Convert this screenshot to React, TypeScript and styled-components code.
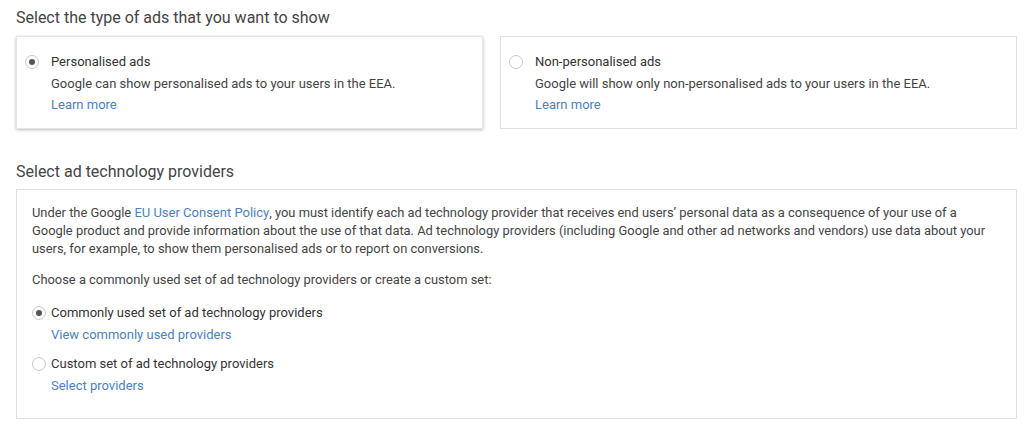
import React from "react";
import styled, { createGlobalStyle } from "styled-components";

const Global = createGlobalStyle`
  html, body { margin: 0; padding: 0; background: #fff; }
  body { font-family: Roboto, "Liberation Sans", Arial, sans-serif; color: #3c3c3c; }
  * { box-sizing: border-box; }
`;

const Page = styled.div`
  width: 1024px;
  height: 425px;
  padding: 8px 7px 0 16px;
  display: flex;
  flex-direction: column;
  overflow: hidden;
`;

const Heading = styled.h2`
  margin: 0;
  font-size: 16px;
  font-weight: 400;
  line-height: 20px;
  color: #444;
`;

const CardRow = styled.div`
  display: grid;
  grid-template-columns: 467px 1fr;
  gap: 17px;
  margin-top: 8px;
`;

const Card = styled.div<{ $selected?: boolean }>`
  height: 93px;
  background: #fff;
  border: 1px solid ${(p) => (p.$selected ? "#e6e6e6" : "#e0e0e0")};
  box-shadow: ${(p) => (p.$selected ? "0 1px 3px rgba(0,0,0,0.28)" : "none")};
  padding: 17px 16px 0 8px;
  display: flex;
  gap: 12px;
`;

const Radio = styled.span<{ $checked?: boolean }>`
  flex: none;
  width: 14px;
  height: 14px;
  margin-top: 1px;
  border-radius: 50%;
  border: 1px solid #c8c8c8;
  background: #fff;
  display: flex;
  align-items: center;
  justify-content: center;
  &::after {
    content: "";
    width: 6px;
    height: 6px;
    border-radius: 50%;
    background: ${(p) => (p.$checked ? "#555" : "transparent")};
  }
`;

const OptionText = styled.div`
  display: flex;
  flex-direction: column;
`;

const OptionTitle = styled.div`
  font-size: 13px;
  line-height: 16px;
  color: #333;
`;

const Desc = styled.div`
  margin-top: 6px;
  font-size: 13px;
  line-height: 16px;
  color: #444;
`;

const Link = styled.a`
  color: #4b7fc7;
  text-decoration: none;
  font-size: 13px;
  line-height: 16px;
  cursor: pointer;
`;

const BlockLink = styled(Link)`
  display: block;
  margin-top: 5px;
`;

const Heading2 = styled(Heading)`
  margin-top: 33px;
`;

const Box = styled.div`
  margin-top: 7px;
  height: 230px;
  border: 1px solid #e0e0e0;
  padding: 14px 16px 0 15px;
`;

const Para = styled.p`
  margin: 0;
  font-size: 12.9px;
  line-height: 18px;
  color: #444;
`;

const ChooseLine = styled(Para)`
  margin-top: 13px;
`;

const ProviderList = styled.div`
  margin-top: 16px;
  display: flex;
  flex-direction: column;
  gap: 13px;
`;

const ProviderOption = styled.div`
  display: flex;
  gap: 5px;
`;

const ProviderLink = styled(Link)`
  display: block;
  margin-top: 6px;
`;

export default function App() {
  return (
    <>
      <Global />
      <Page>
        <Heading>Select the type of ads that you want to show</Heading>
        <CardRow>
          <Card $selected>
            <Radio $checked />
            <OptionText>
              <OptionTitle>Personalised ads</OptionTitle>
              <Desc>Google can show personalised ads to your users in the EEA.</Desc>
              <BlockLink>Learn more</BlockLink>
            </OptionText>
          </Card>
          <Card>
            <Radio />
            <OptionText>
              <OptionTitle>Non-personalised ads</OptionTitle>
              <Desc>Google will show only non-personalised ads to your users in the EEA.</Desc>
              <BlockLink>Learn more</BlockLink>
            </OptionText>
          </Card>
        </CardRow>
        <Heading2>Select ad technology providers</Heading2>
        <Box>
          <Para>
            Under the Google <Link>EU User Consent Policy</Link>, you must identify each ad technology
            provider that receives end users’ personal data as a consequence of your use of a Google
            product and provide information about the use of that data. Ad technology providers
            (including Google and other ad networks and vendors) use data about your users, for
            example, to show them personalised ads or to report on conversions.
          </Para>
          <ChooseLine>Choose a commonly used set of ad technology providers or create a custom set:</ChooseLine>
          <ProviderList>
            <ProviderOption>
              <Radio $checked />
              <OptionText>
                <OptionTitle>Commonly used set of ad technology providers</OptionTitle>
                <ProviderLink>View commonly used providers</ProviderLink>
              </OptionText>
            </ProviderOption>
            <ProviderOption>
              <Radio />
              <OptionText>
                <OptionTitle>Custom set of ad technology providers</OptionTitle>
                <ProviderLink>Select providers</ProviderLink>
              </OptionText>
            </ProviderOption>
          </ProviderList>
        </Box>
      </Page>
    </>
  );
}
